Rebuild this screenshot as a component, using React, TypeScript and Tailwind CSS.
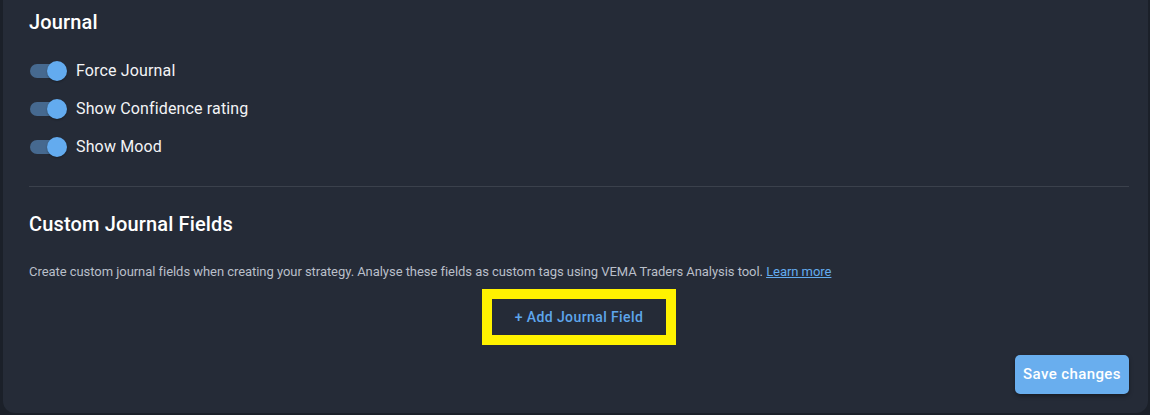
import { useState } from 'react'

function Toggle({ label }: { label: string }) {
  const [on, setOn] = useState(true)
  return (
    <div className="flex items-center h-[38px]">
      <button
        onClick={() => setOn(!on)}
        className="relative w-[38px] h-[20px] mr-[9px] flex items-center"
      >
        <span className={`absolute left-[1px] w-[35px] h-[14px] rounded-full ${on ? 'bg-[#46698f]' : 'bg-[#5a606b]'}`} />
        <span
          className={`absolute top-0 w-[20px] h-[20px] rounded-full shadow-[0_1px_2px_rgba(0,0,0,0.3)] ${on ? 'left-[18px] bg-[#63abef]' : 'left-0 bg-[#d0d4da]'}`}
        />
      </button>
      <span className="text-[16px] leading-6 tracking-[0.15px] text-[#f3f4f6]">{label}</span>
    </div>
  )
}

export default function App() {
  return (
    <div className="w-[1150px] h-[415px] bg-[#1b2029] pl-[3px] pr-[2px] overflow-hidden font-['Roboto',sans-serif]">
      <div className="h-[413px] bg-[#252b37] rounded-b-[12px] pl-[26px] pr-[16px] pt-[10px] pb-[19px] flex flex-col">
        <h2 className="text-[20px] leading-6 font-medium tracking-[0.15px] text-white">Journal</h2>

        <div className="mt-[18px] flex flex-col">
          <Toggle label="Force Journal" />
          <Toggle label="Show Confidence rating" />
          <Toggle label="Show Mood" />
        </div>

        <div className="mt-[20px] h-px bg-[#3b414c] w-[1100px]" />

        <h2 className="mt-[25px] text-[20px] leading-6 font-medium tracking-[0.15px] text-white">Custom Journal Fields</h2>

        <p className="mt-[27px] text-[13px] leading-[18px] tracking-[-0.05px] text-[#b9bfc9]">
          Create custom journal fields when creating your strategy. Analyse these fields as custom tags using VEMA Traders Analysis tool.{' '}
          <a href="#" className="text-[#63abef] underline">Learn more</a>
        </p>

        <div className="mt-[8px] w-[1100px] flex justify-center">
          <div className="border-[10px] border-[#fff200]">
            <button className="w-[174px] h-[36px] text-[14px] font-medium text-[#5ea6ec] tracking-[0.4px]">
              + Add Journal Field
            </button>
          </div>
        </div>

        <div className="mt-[10px] w-[1100px] flex justify-end">
          <button className="w-[114px] h-[39px] rounded-[5px] bg-[#69aeee] text-white text-[15px] font-medium tracking-[0.4px] shadow-[0_2px_4px_rgba(0,0,0,0.35)]">
            Save changes
          </button>
        </div>
      </div>
    </div>
  )
}
